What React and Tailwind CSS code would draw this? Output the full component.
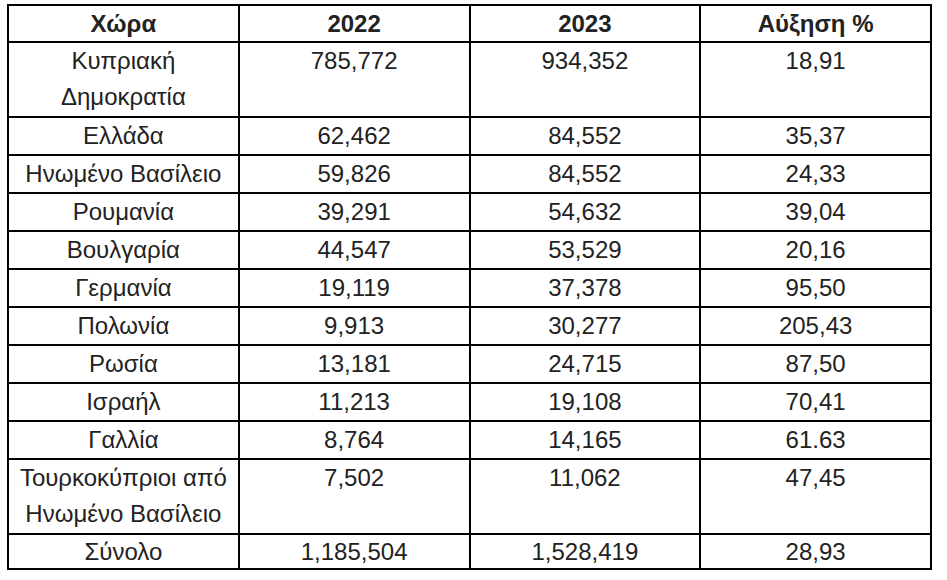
const rows = [
  ["Κυπριακή", "Δημοκρατία", "785,772", "934,352", "18,91"],
  ["Ελλάδα", null, "62,462", "84,552", "35,37"],
  ["Ηνωμένο Βασίλειο", null, "59,826", "84,552", "24,33"],
  ["Ρουμανία", null, "39,291", "54,632", "39,04"],
  ["Βουλγαρία", null, "44,547", "53,529", "20,16"],
  ["Γερμανία", null, "19,119", "37,378", "95,50"],
  ["Πολωνία", null, "9,913", "30,277", "205,43"],
  ["Ρωσία", null, "13,181", "24,715", "87,50"],
  ["Ισραήλ", null, "11,213", "19,108", "70,41"],
  ["Γαλλία", null, "8,764", "14,165", "61.63"],
  ["Τουρκοκύπριοι από", "Ηνωμένο Βασίλειο", "7,502", "11,062", "47,45"],
  ["Σύνολο", null, "1,185,504", "1,528,419", "28,93", true],
];

const cell = "border-2 border-black p-0 text-center align-top whitespace-nowrap";

export default function App() {
  return (
    <div className="min-h-[580px] bg-white pl-[7px] pt-[4px] font-['Liberation_Sans',Arial,sans-serif] text-[24px] text-[#222]">
      <table className="w-[925px] table-fixed border-collapse border-2 border-black">
        <thead>
          <tr>
            {["Χώρα", "2022", "2023", "Αύξηση %"].map((h) => (
              <th key={h} className="border-2 border-black p-0 text-center align-middle font-bold leading-[35px]">
                {h}
              </th>
            ))}
          </tr>
        </thead>
        <tbody>
          {rows.map(([line1, line2, a, b, c, last]) => (
            <tr key={line1} className={line2 ? "h-[75px] leading-[36px]" : last ? "leading-[33px]" : "leading-[36px]"}>
              <td className={cell}>
                {line1}
                {line2 ? (
                  <>
                    <br />
                    {line2}
                  </>
                ) : null}
              </td>
              <td className={cell}>{a}</td>
              <td className={cell}>{b}</td>
              <td className={cell}>{c}</td>
            </tr>
          ))}
        </tbody>
      </table>
    </div>
  );
}
